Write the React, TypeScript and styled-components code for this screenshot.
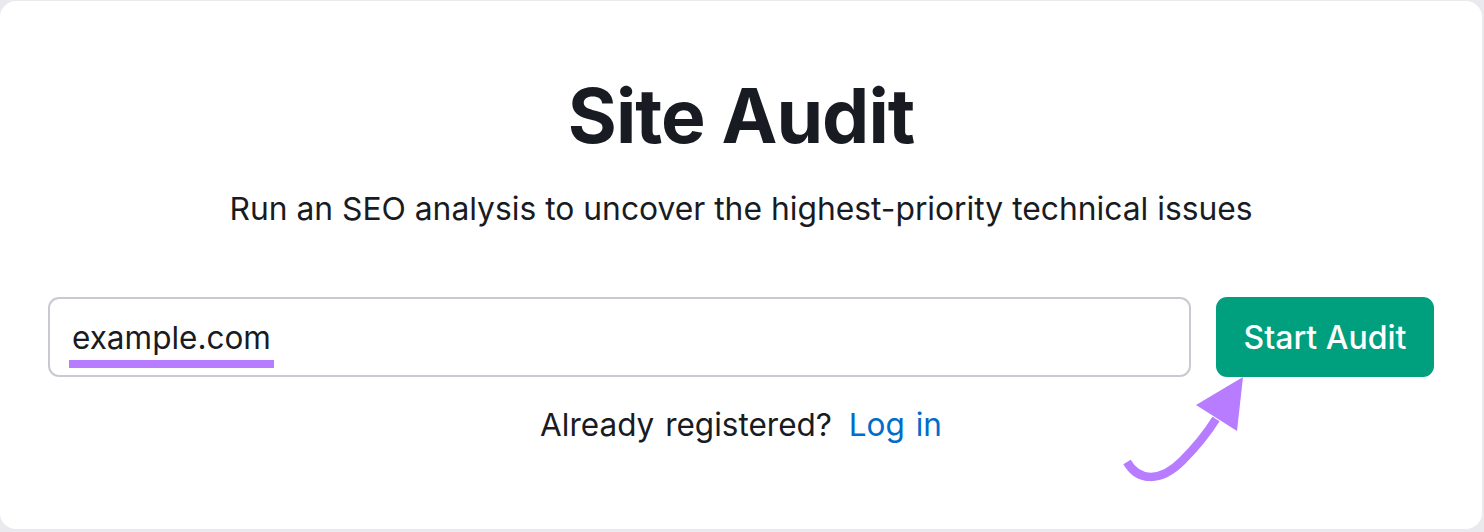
import styled, { createGlobalStyle } from "styled-components";

const GlobalStyle = createGlobalStyle`
  html, body {
    margin: 0;
    padding: 0;
    background: #e9e9ee;
  }

  body {
    font-family: Inter, "Noto Sans", sans-serif;
    color: #191b23;
  }
`;

const Page = styled.div`
  width: 1484px;
  height: 532px;
  box-sizing: border-box;
  padding: 1px 2px 3px 0;
`;

const Card = styled.div`
  height: 100%;
  box-sizing: border-box;
  background: #ffffff;
  border-radius: 16px;
  padding: 70px 48px 0;
  display: flex;
  flex-direction: column;
  align-items: center;
`;

const Title = styled.h1`
  margin: 0;
  font-size: 75px;
  line-height: 90px;
  font-weight: 700;
  letter-spacing: -1px;
  color: #191b23;
`;

const Subtitle = styled.p`
  margin: 28px 0 0;
  font-size: 31.8px;
  line-height: 40px;
  font-weight: 400;
  color: #191b23;
`;

const FormRow = styled.div`
  align-self: stretch;
  margin-top: 68px;
  display: flex;
  gap: 25px;
`;

const InputBox = styled.div`
  flex: 1;
  height: 80px;
  box-sizing: border-box;
  border: 2px solid #c8cad1;
  border-radius: 11px;
  padding: 0 22px;
  display: flex;
  align-items: center;
`;

const DomainText = styled.span`
  position: relative;
  font-size: 31.5px;
  line-height: 40px;
  color: #191b23;
  padding-top: 2px;

  &::after {
    content: "";
    position: absolute;
    left: -3px;
    right: -3px;
    bottom: -10px;
    height: 8px;
    background: #b77cff;
  }
`;

const ButtonWrap = styled.div`
  position: relative;
`;

const StartButton = styled.button`
  height: 80px;
  width: 218px;
  border: none;
  border-radius: 11px;
  background: #009f7e;
  color: #ffffff;
  font-family: Inter, "Noto Sans", sans-serif;
  font-size: 32px;
  font-weight: 500;
  cursor: pointer;
`;

const Arrow = styled.svg`
  position: absolute;
  left: -96px;
  top: 80px;
`;

const LoginLine = styled.p`
  margin: 28px 0 0;
  font-size: 31.5px;
  line-height: 40px;
  color: #191b23;
  word-spacing: 2px;
`;

const LoginLink = styled.a`
  color: #006dca;
  text-decoration: none;
  margin-left: 6px;
`;

function PointerArrow() {
  return (
    <Arrow width="130" height="110" viewBox="0 0 130 110">
      <path
        d="M7 85 C 18 104, 40 106, 62 84 C 74 72, 86 58, 96 42"
        fill="none"
        stroke="#b77cff"
        strokeWidth="8.5"
      />
      <polygon points="123,0 76,28 117,54" fill="#b77cff" />
    </Arrow>
  );
}

function SiteAuditPage() {
  return (
    <Page>
      <GlobalStyle />
      <Card>
        <Title>Site Audit</Title>
        <Subtitle>
          Run an SEO analysis to uncover the highest-priority technical issues
        </Subtitle>

        <FormRow>
          <InputBox>
            <DomainText>example.com</DomainText>
          </InputBox>
          <ButtonWrap>
            <StartButton type="button">Start Audit</StartButton>
            <PointerArrow />
          </ButtonWrap>
        </FormRow>

        <LoginLine>
          Already registered? <LoginLink href="#">Log in</LoginLink>
        </LoginLine>
      </Card>
    </Page>
  );
}

export default SiteAuditPage;
